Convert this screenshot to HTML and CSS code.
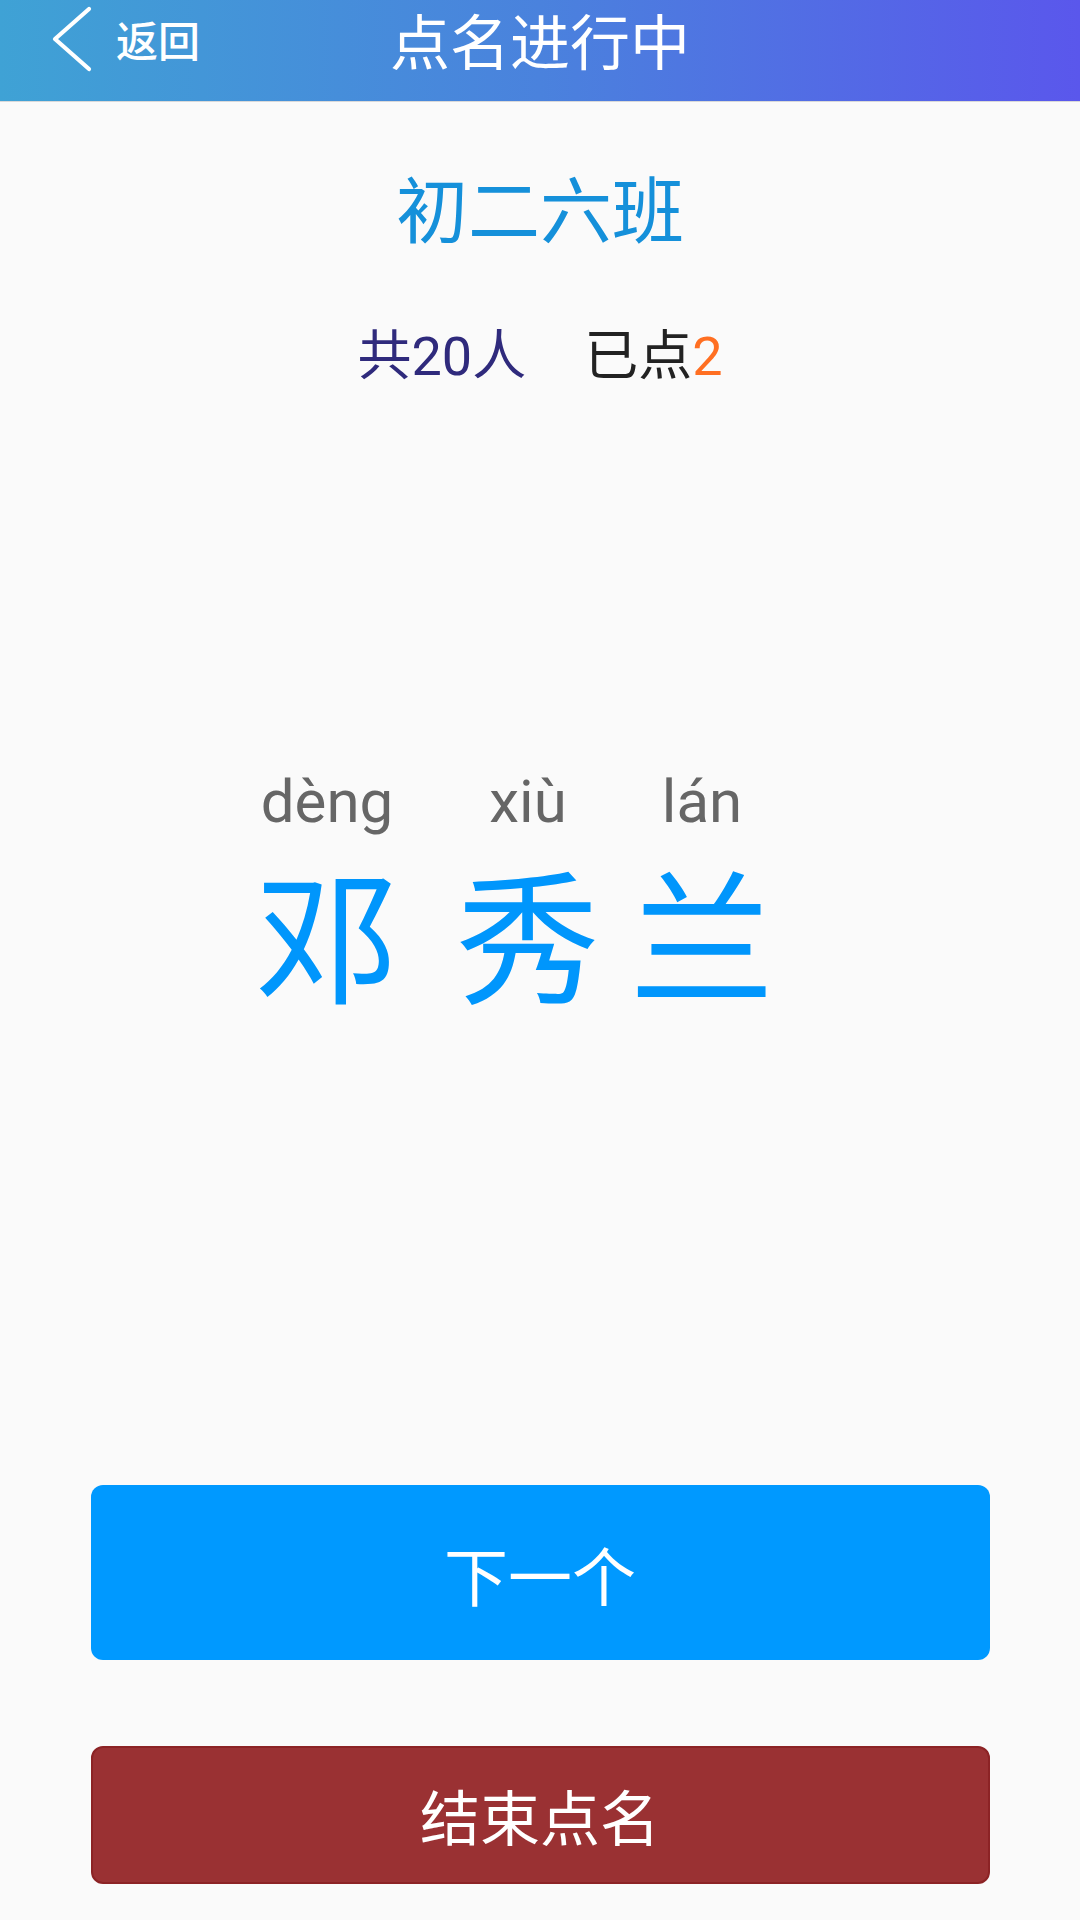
FILE: index.html
```html
<!DOCTYPE html>
<html lang="zh-CN">
<head>
<meta charset="utf-8">
<title>点名进行中</title>
<link rel="stylesheet" href="styles.css">
</head>
<body>
<header class="topbar">
  <div class="topbar-left">
    <a class="back">
      <svg class="back-icon" viewBox="0 0 44 66" width="44" height="66" aria-hidden="true">
        <polyline points="39,3 5,33 39,63" fill="none" stroke="#ffffff" stroke-width="4.2" stroke-linecap="round" stroke-linejoin="round"/>
      </svg>
      <span class="back-text">返回</span>
    </a>
  </div>
  <h1 class="topbar-title">点名进行中</h1>
  <div class="topbar-right"></div>
</header>

<main class="content">
  <div class="class-name">初二六班</div>
  <div class="stats">
    <span class="total">共<span class="num">20</span>人</span>
    <span class="done">已点<span class="num done-num">2</span></span>
  </div>

  <div class="student">
    <div class="col col-1">
      <span class="pinyin">dèng</span>
      <span class="hanzi">邓</span>
    </div>
    <div class="col col-2">
      <span class="pinyin">xiù</span>
      <span class="hanzi">秀</span>
    </div>
    <div class="col col-3">
      <span class="pinyin">lán</span>
      <span class="hanzi">兰</span>
    </div>
  </div>

  <button class="btn btn-next">下一个</button>
  <button class="btn btn-end">结束点名</button>
</main>
</body>
</html>
```

FILE: styles.css
```css
* {
  box-sizing: border-box;
}

html, body {
  margin: 0;
  padding: 0;
}

body {
  width: 1080px;
  min-height: 1920px;
  background: #fafafa;
  font-family: "Noto Sans CJK SC", "Noto Sans", sans-serif;
}

.topbar {
  height: 102px;
  padding-bottom: 24px;
  display: grid;
  grid-template-columns: 1fr auto 1fr;
  align-items: center;
  background: linear-gradient(90deg, #3fa2d5 0%, #4a82dd 50%, #5a57ec 100%);
  border-bottom: 1px solid #d9d9d9;
  color: #ffffff;
}

.topbar-left {
  display: flex;
  align-items: center;
  padding-left: 50px;
}

.back {
  display: flex;
  align-items: center;
}

.back-icon {
  display: block;
}

.back-text {
  margin-left: 22px;
  font-size: 42px;
  line-height: 42px;
  font-weight: 500;
}

.topbar-title {
  margin: 0;
  font-size: 60px;
  line-height: 60px;
  font-weight: 400;
  white-space: nowrap;
}

.content {
  display: flex;
  flex-direction: column;
  align-items: center;
}

.class-name {
  margin-top: 68px;
  font-size: 72px;
  line-height: 72px;
  color: #1590da;
}

.stats {
  margin-top: 83px;
  font-size: 54px;
  line-height: 54px;
  display: flex;
}

.num {
  font-family: Roboto, "Noto Sans CJK SC", sans-serif;
}

.total {
  color: #2f2a7c;
}

.done {
  margin-left: 58px;
  color: #222222;
}

.done-num {
  color: #ff6f22;
}

.student {
  align-self: stretch;
  margin-top: 388px;
  padding-left: 255px;
  display: flex;
}

.col {
  width: 144px;
  display: flex;
  flex-direction: column;
  align-items: center;
}

.col-2 {
  margin-left: 57px;
}

.col-3 {
  margin-left: 30px;
}

.pinyin {
  font-family: Roboto, "Noto Sans", sans-serif;
  font-size: 60px;
  line-height: 60px;
  color: #666666;
  white-space: nowrap;
}

.hanzi {
  margin-top: 26px;
  font-size: 144px;
  line-height: 144px;
  color: #0096fc;
}

.btn {
  width: 899px;
  border: none;
  border-radius: 12px;
  color: #ffffff;
  font-family: "Noto Sans CJK SC", sans-serif;
  display: flex;
  align-items: center;
  justify-content: center;
  padding: 0;
}

.btn-next {
  margin-top: 483px;
  height: 175px;
  background: #0099ff;
  font-size: 64px;
  line-height: 64px;
}

.btn-end {
  margin-top: 86px;
  height: 138px;
  background: #9a3133;
  border: 2px solid #8c2325;
  font-size: 60px;
  line-height: 60px;
}
```
